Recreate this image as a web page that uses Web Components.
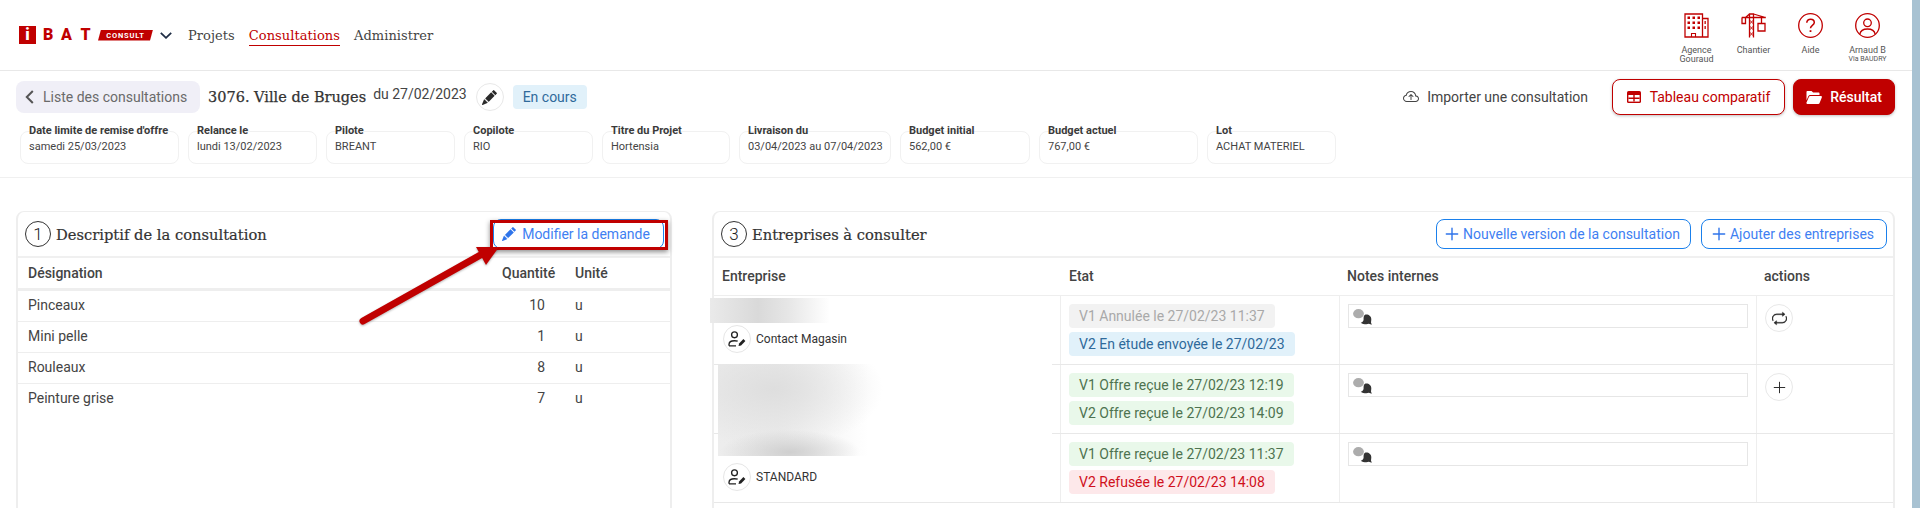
<!DOCTYPE html>
<html lang="fr">
<head>
<meta charset="utf-8">
<title>Consultations</title>
<style>
  html, body { margin: 0; height: 508px; overflow: hidden; background: #fff; }
  body { font: 14px Roboto, "Liberation Sans", sans-serif; color: #444; }
</style>
</head>
<body>
<app-shell>
  <app-header>
    <brand-logo slot="brand"></brand-logo>
    <nav-link slot="nav">Projets</nav-link>
    <nav-link slot="nav" active>Consultations</nav-link>
    <nav-link slot="nav">Administrer</nav-link>
    <tool-item slot="tools" icon="building">Agence<br>Gouraud</tool-item>
    <tool-item slot="tools" icon="crane">Chantier</tool-item>
    <tool-item slot="tools" icon="help">Aide</tool-item>
    <tool-item slot="tools" icon="user">Arnaud B<small slot="sub">Via BAUDRY</small></tool-item>
  </app-header>

  <consult-bar>
    <back-link slot="left">Liste des consultations</back-link>
    <page-title slot="left" date="du 27/02/2023">3076. Ville de Bruges</page-title>
    <round-btn slot="left" icon="pencil"></round-btn>
    <state-badge slot="left">En cours</state-badge>
    <import-link slot="right">Importer une consultation</import-link>
    <action-btn slot="right" icon="table">Tableau comparatif</action-btn>
    <action-btn slot="right" icon="folder" filled>Résultat</action-btn>
    <info-card slot="cards" label="Date limite de remise d'offre" w="159">samedi 25/03/2023</info-card>
    <info-card slot="cards" label="Relance le" w="129">lundi 13/02/2023</info-card>
    <info-card slot="cards" label="Pilote" w="129">BREANT</info-card>
    <info-card slot="cards" label="Copilote" w="129">RIO</info-card>
    <info-card slot="cards" label="Titre du Projet" w="128">Hortensia</info-card>
    <info-card slot="cards" label="Livraison du" w="152">03/04/2023 au 07/04/2023</info-card>
    <info-card slot="cards" label="Budget initial" w="130">562,00 €</info-card>
    <info-card slot="cards" label="Budget actuel" w="159">767,00 €</info-card>
    <info-card slot="cards" label="Lot" w="129">ACHAT MATERIEL</info-card>
  </consult-bar>

  <panel-row>
    <panel-card num="1" heading="Descriptif de la consultation" style="width:656px">
      <outline-btn slot="buttons" icon="pencil" style="--w:171px;--gap:6px;--pr:5px">Modifier la demande</outline-btn>
      <line-head>
        <span>Désignation</span><span>Quantité</span><span>Unité</span>
      </line-head>
      <line-row qty="10" unit="u">Pinceaux</line-row>
      <line-row qty="1" unit="u">Mini pelle</line-row>
      <line-row qty="8" unit="u">Rouleaux</line-row>
      <line-row qty="7" unit="u" last>Peinture grise</line-row>
    </panel-card>

    <panel-card num="3" heading="Entreprises à consulter" style="width:1183px">
      <outline-btn slot="buttons" icon="plus" style="--w:255px;--gap:4px;--pr:2px">Nouvelle version de la consultation</outline-btn>
      <outline-btn slot="buttons" icon="plus" style="--w:186px;--gap:4px;--pr:2px">Ajouter des entreprises</outline-btn>
      <firm-head>
        <span>Entreprise</span><span>Etat</span><span>Notes internes</span><span>actions</span>
      </firm-head>
      <firm-row>
        <blur-patch slot="firm" kind="a"></blur-patch>
        <contact-tag slot="firm">Contact Magasin</contact-tag>
        <status-chip slot="state" tone="grey">V1 Annulée le 27/02/23 11:37</status-chip>
        <status-chip slot="state" tone="blue">V2 En étude envoyée le 27/02/23</status-chip>
        <note-field slot="notes"></note-field>
        <round-btn slot="actions" icon="repeat"></round-btn>
      </firm-row>
      <firm-row>
        <blur-patch slot="firm" kind="b"></blur-patch>
        <status-chip slot="state" tone="green">V1 Offre reçue le 27/02/23 12:19</status-chip>
        <status-chip slot="state" tone="green">V2 Offre reçue le 27/02/23 14:09</status-chip>
        <note-field slot="notes"></note-field>
        <round-btn slot="actions" icon="plus"></round-btn>
      </firm-row>
      <firm-row>
        <contact-tag slot="firm">STANDARD</contact-tag>
        <status-chip slot="state" tone="green">V1 Offre reçue le 27/02/23 11:37</status-chip>
        <status-chip slot="state" tone="red">V2 Refusée le 27/02/23 14:08</status-chip>
        <note-field slot="notes"></note-field>
      </firm-row>
    </panel-card>
  </panel-row>
  <call-out></call-out>
</app-shell>

<script>
const SERIF = '"DejaVu Serif", "Liberation Serif", serif';

const ICONS = {
  pencil: '<svg viewBox="0 0 16 16" fill="currentColor"><path d="M12.854.146a.5.5 0 0 0-.707 0L10.5 1.793 14.207 5.5l1.647-1.646a.5.5 0 0 0 0-.708l-3-3zm.646 6.061L9.793 2.5 3.293 9H3.5a.5.5 0 0 1 .5.5v.5h.5a.5.5 0 0 1 .5.5v.5h.5a.5.5 0 0 1 .5.5v.5h.5a.5.5 0 0 1 .5.5v.207l6.5-6.5zm-7.468 7.468A.5.5 0 0 1 6 13.5V13h-.5a.5.5 0 0 1-.5-.5V12h-.5a.5.5 0 0 1-.5-.5V11h-.5a.5.5 0 0 1-.5-.5V10h-.5a.499.499 0 0 1-.175-.032l-.179.178a.5.5 0 0 0-.11.168l-2 5a.5.5 0 0 0 .65.65l5-2a.5.5 0 0 0 .168-.11l.178-.178z"/></svg>',
  plus: '<svg viewBox="0 0 16 16" fill="none" stroke="currentColor" stroke-width="1.6" stroke-linecap="round"><path d="M8 1.500v13M1.500 8h13"/></svg>',
  repeat: '<svg viewBox="0 0 16 16" fill="currentColor" stroke="currentColor" stroke-width=".35"><path d="M11 5.466V4H5a4 4 0 0 0-3.584 5.777.5.5 0 1 1-.896.446A5 5 0 0 1 5 3h6V1.534a.25.25 0 0 1 .41-.192l2.36 1.966c.12.1.12.284 0 .384l-2.36 1.966a.25.25 0 0 1-.41-.192Zm3.81.086a.5.5 0 0 1 .67.225A5 5 0 0 1 11 13H5v1.466a.25.25 0 0 1-.41.192l-2.36-1.966a.25.25 0 0 1 0-.384l2.36-1.966a.25.25 0 0 1 .41.192V12h6a4 4 0 0 0 3.585-5.777.5.5 0 0 1 .225-.67Z"/></svg>',
  table: '<svg viewBox="0 0 14 12"><rect width="14" height="12" rx="1.6" fill="currentColor"/><path d="M1.4 4h11.2v6.6H1.4z" fill="#fff"/><path d="M6.3 4h1.4v6.6H6.3zM1.4 6.6h11.2V8H1.4z" fill="currentColor"/></svg>',
  folder: '<svg viewBox="0 0 16 13" fill="currentColor"><path d="M1.5 0h4l1.6 1.6h5.4c.6 0 1 .4 1 1V4H4.2c-.9 0-1.5.4-1.900 1.200L.5 9.300V1c0-.6.4-1 1-1Z"/><path d="M4.200 5h10.600c.8 0 1.300.7 1 1.400l-2.200 5.600c-.2.6-.7 1-1.400 1H1.200c-.6 0-1-.6-.8-1.200l2.500-5.900C3.100 5.300 3.600 5 4.200 5Z"/></svg>',
  cloud: '<svg viewBox="0 0 16 16" fill="currentColor"><path d="M7.646 5.146a.5.5 0 0 1 .708 0l2 2a.5.5 0 0 1-.708.708L8.500 6.707V10.500a.5.5 0 0 1-1 0V6.707L6.354 7.854a.5.5 0 1 1-.708-.708l2-2z"/><path d="M4.406 3.342A5.530 5.530 0 0 1 8 2c2.690 0 4.923 2 5.166 4.579C14.758 6.804 16 8.137 16 9.773 16 11.569 14.502 13 12.687 13H3.781C1.708 13 0 11.366 0 9.318c0-1.763 1.266-3.223 2.942-3.593.143-.863.698-1.723 1.464-2.383zm.653.757c-.757.653-1.153 1.440-1.153 2.056v.448l-.445.049C2.064 6.805 1 7.952 1 9.318 1 10.785 2.230 12 3.781 12h8.906C13.980 12 15 10.988 15 9.773c0-1.216-1.020-2.228-2.313-2.228h-.5v-.5C12.188 4.825 10.328 3 8 3a4.530 4.530 0 0 0-2.941 1.100z"/></svg>',
  building: '<svg viewBox="0 0 25 25" fill="none" stroke="#c00000" stroke-width="1.100"><path d="M1 1h17.500v23H1zM18.500 5.500h5.500V24h-5.500M.5 24h24" stroke-width="1.300"/><path d="M7.500 24v-3.500h4V24" /><g fill="#c00000" stroke="none"><rect x="3.500" y="3.500" width="2.500" height="2.500"/><rect x="8.500" y="3.500" width="2.500" height="2.500"/><rect x="13.500" y="3.500" width="2.500" height="2.500"/><rect x="3.500" y="8.500" width="2.500" height="2.500"/><rect x="8.500" y="8.500" width="2.500" height="2.500"/><rect x="13.500" y="8.500" width="2.500" height="2.500"/><rect x="3.500" y="13.500" width="2.500" height="2.500"/><rect x="8.500" y="13.500" width="2.500" height="2.500"/><rect x="13.500" y="13.500" width="2.500" height="2.500"/><rect x="20.500" y="8" width="1.300" height="3"/><rect x="20.500" y="13" width="1.300" height="3"/></g></svg>',
  crane: '<svg viewBox="0 0 25 25" fill="none" stroke="#c00000" stroke-width="1.300"><path d="M8.500 24.500V1h4v23.500M.8 4.500h24M1 4.500v6h3.500v-6M12.500 1l12 3.500M8.500 1L4.500 4.500"/><path d="M8.500 7l4 4M12.500 7l-4 4M8.500 13l4 4M12.500 13l-4 4M8.500 19l4 4M12.500 19l-4 4" stroke-width=".9"/><path d="M20.500 4.500v6M17 10.500h7v7.500h-7z"/></svg>',
  help: '<svg viewBox="0 0 25 25" fill="none" stroke="#c00000" stroke-width="1.300"><circle cx="12.500" cy="12.500" r="11.800"/><path d="M8.800 9.800c0-2.200 1.600-3.600 3.800-3.600s3.700 1.400 3.700 3.300c0 2.900-3.800 2.900-3.800 5.700" stroke-width="1.500"/><path d="M12.500 17.200v1.800" stroke-width="1.800"/></svg>',
  user: '<svg viewBox="0 0 25 25" fill="none" stroke="#c00000" stroke-width="1.300"><circle cx="12.500" cy="12.500" r="11.800"/><circle cx="12.500" cy="9.800" r="3.800"/><path d="M4.800 21.300c.6-3.700 3.300-5.300 7.700-5.300s7.100 1.600 7.700 5.300"/></svg>',
  contact: '<svg viewBox="0 0 18 16" fill="none" stroke="#222" stroke-width="1.350"><circle cx="6.500" cy="3.800" r="2.900"/><path d="M1 14.800v-1.300c0-2.700 2.300-3.800 5.500-3.800 1.200 0 2.300.2 3.200.5M1 14.800h7"/><path d="M10.500 15l.6-2.600 4.300-4.300 2 2-4.300 4.300z" fill="#222" stroke="none"/></svg>',
  bubbles: '<svg viewBox="0 0 19 16"><ellipse cx="5.500" cy="4.700" rx="5.400" ry="4.600" fill="#acacac"/><path d="M13.300 5.400c2.800 0 5 2.100 5 4.700 0 1.300-.3 3.300-.3 3.300l.8 2.300-3-.9c-.7.300-1.500.5-2.500.5-2.100 0-4.200-.5-5.500-1.500 1.700-.2 2.800-1.700 2.800-3.200 0-2.800 0-5.200 2.700-5.200Z" fill="#333"/></svg>'
};

// small base so each element is just: styles + markup
class ShadowEl extends HTMLElement {
  static css = '';
  html() { return '<slot></slot>'; }
  connectedCallback() {
    if (this.shadowRoot) return;
    this.attachShadow({ mode: 'open' });
    this.shadowRoot.innerHTML = `<style>${this.constructor.css}</style>${this.html()}`;
  }
}

class AppShell extends ShadowEl {
  static css = `
    :host { display: block; position: relative; height: 508px; overflow: hidden; padding-right: 8px; box-sizing: border-box; }
    .scroll { position: absolute; top: 0; right: 0; bottom: 0; width: 8px; background: #a8c2d2; }
  `;
  html() { return '<slot></slot><div class="scroll"></div>'; }
}

class AppHeader extends ShadowEl {
  static css = `
    :host { display: flex; align-items: center; height: 71px; box-sizing: border-box; padding: 0 16px 0 19px; border-bottom: 1px solid #e8e8e8; }
    nav { display: flex; gap: 14px; margin-left: 16px; }
    .tools { margin-left: auto; display: flex; align-self: flex-start; padding-top: 13px; }
  `;
  html() {
    return `<slot name="brand"></slot><nav><slot name="nav"></slot></nav><div class="tools"><slot name="tools"></slot></div>`;
  }
}

class BrandLogo extends ShadowEl {
  static css = `
    :host { display: flex; align-items: center; color: #c00000; }
    .i { width: 17px; height: 18px; background: #c00000; color: #fff; font: 900 16px/18px Roboto, sans-serif; text-align: center; }
    .l { font: 900 16px/18px Roboto, sans-serif; margin-left: 7px; text-align: center; }
    .c { margin-left: 7px; width: 55px; height: 11px; background: #c00000; color: #fff; font: 700 7.500px/11px Roboto, sans-serif; letter-spacing: .8px; text-align: center;
         clip-path: polygon(3px 0, 100% 0, calc(100% - 3px) 100%, 0 100%); }
    svg { width: 12px; height: 7px; margin-left: 7px; }
  `;
  html() {
    return `<span class="i">i</span><span class="l" style="width:10px">B</span><span class="l" style="width:13px">A</span><span class="l" style="width:11px">T</span><span class="c">CONSULT</span>
      <svg viewBox="0 0 12 7" fill="none" stroke="#1f2d45" stroke-width="1.800"><path d="M.8.8 6 5.800 11.200.8"/></svg>`;
  }
}

class NavLink extends ShadowEl {
  static css = `
    :host { display: block; font: 13px/18px ${SERIF}; letter-spacing: .05px; color: #444; padding-top: 2px; border-bottom: 1px solid transparent; }
    :host([active]) { color: #c00000; border-bottom-color: #c00000; }
  `;
}

class ToolItem extends ShadowEl {
  static css = `
    :host { display: flex; flex-direction: column; align-items: center; width: 57px; font: 9px/9px Roboto, sans-serif; color: #555; text-align: center; }
    .ic { width: 25px; height: 25px; margin-bottom: 8px; }
    ::slotted(small) { display: block; font-size: 7px; line-height: 9px; white-space: nowrap; }
  `;
  html() { return `<div class="ic">${ICONS[this.getAttribute('icon')]}</div><div><slot></slot><slot name="sub"></slot></div>`; }
}

class ConsultBar extends ShadowEl {
  static css = `
    :host { display: block; height: 107px; box-sizing: border-box; padding: 8px 17px 0 16px; border-bottom: 1px solid #f0f0f0; }
    .top { display: flex; align-items: center; height: 36px; }
    .left, .right { display: flex; align-items: center; }
    .right { margin-left: auto; }
    .cards { display: flex; gap: 9px; margin-top: 16px; padding-left: 4px; }
  `;
  html() {
    return `<div class="top"><div class="left"><slot name="left"></slot></div><div class="right"><slot name="right"></slot></div></div>
      <div class="cards"><slot name="cards"></slot></div>`;
  }
}

class BackLink extends ShadowEl {
  static css = `
    :host { display: flex; align-items: center; gap: 9px; width: 184px; height: 32px; box-sizing: border-box; padding-left: 9px; background: #f0eff7; border-radius: 8px; color: #6a6a6a; font-size: 14px; white-space: nowrap; }
    svg { width: 9px; height: 14px; }
  `;
  html() { return `<svg viewBox="0 0 9 14" fill="none" stroke="#555" stroke-width="2"><path d="M7.800 1 1.800 7l6 6"/></svg><slot></slot>`; }
}

class PageTitle extends ShadowEl {
  static css = `
    :host { display: flex; align-items: center; margin-left: 8px; white-space: nowrap; }
    .t { font: 14.500px/20px ${SERIF}; color: #333; -webkit-text-stroke: .25px #333; }
    .d { font-size: 14px; color: #444; margin-left: 7px; position: relative; top: -3px; }
  `;
  html() { return `<span class="t"><slot></slot></span><span class="d">${this.getAttribute('date')}</span>`; }
}

class RoundBtn extends ShadowEl {
  static css = `
    :host { display: flex; align-items: center; justify-content: center; width: 28px; height: 28px; box-sizing: border-box; border: 1px solid #e8e8e8; border-radius: 50%; color: #2a2a2a; }
    :host([slot="left"]) { margin-left: 9px; }
    svg { display: block; width: 15px; height: 15px; }
    :host([icon="plus"]) svg { width: 13px; height: 13px; stroke-width: 1.200; }
  `;
  html() { return ICONS[this.getAttribute('icon')]; }
}

class StateBadge extends ShadowEl {
  static css = `
    :host { display: block; margin-left: 9px; height: 24px; width: 74px; border-radius: 4px; background: #e1f1fa; color: #2f6a9b; font-size: 14px; line-height: 24px; text-align: center; }
  `;
}

class ImportLink extends ShadowEl {
  static css = `
    :host { display: flex; align-items: center; gap: 8px; color: #444; font-size: 14px; white-space: nowrap; margin-right: 24px; }
    svg { width: 16px; height: 16px; }
  `;
  html() { return ICONS.cloud + '<slot></slot>'; }
}

class ActionBtn extends ShadowEl {
  static css = `
    :host { display: flex; align-items: center; justify-content: center; gap: 9px; height: 36px; box-sizing: border-box; width: 173px; border: 1px solid #c00000; border-radius: 8px; color: #c00000; background: #fff; font-size: 14px; white-space: nowrap; box-shadow: 0 1px 3px rgba(0,0,0,.25); }
    :host([filled]) { width: 102px; margin-left: 8px; background: #c00000; color: #fff; font-weight: 500; gap: 8px; }
    svg { width: 14px; height: 12px; }
    :host([filled]) svg { width: 16px; height: 13px; }
  `;
  html() { return ICONS[this.getAttribute('icon')] + '<slot></slot>'; }
}

class InfoCard extends ShadowEl {
  static css = `
    :host { display: block; height: 33px; box-sizing: border-box; padding: 0 8px; border: 1px solid #f1f1f1; border-radius: 8px; font-size: 11px; line-height: 14px; color: #444; white-space: nowrap; }
    .l { font-weight: 700; margin-top: -8px; color: #3a3a3a; }
    .v { margin-top: 2px; }
  `;
  html() {
    this.style.width = this.getAttribute('w') + 'px';
    return `<div class="l">${this.getAttribute('label')}</div><div class="v"><slot></slot></div>`;
  }
}

class PanelRow extends ShadowEl {
  static css = `
    :host { display: flex; gap: 40px; padding: 33px 0 0 16px; align-items: flex-start; }
  `;
}

class PanelCard extends ShadowEl {
  static css = `
    :host { display: block; box-sizing: border-box; height: 320px; border: 2px solid #eee; border-width: 1px 2px; border-radius: 8px 8px 0 0; }
    header { display: flex; align-items: center; height: 46px; box-sizing: border-box; border-bottom: 2px solid #f0f0f0; padding: 0 6px 0 7px; }
    .n { flex: none; width: 26px; height: 26px; box-sizing: border-box; border: 1px solid #333; border-radius: 50%; text-align: center; font: 300 17px/24px Roboto, sans-serif; color: #222; }
    h2 { margin: 1px 0 0 5px; font: 14.700px/20px ${SERIF}; color: #333; -webkit-text-stroke: .2px #333; }
    .b { margin-left: auto; display: flex; gap: 10px; }
  `;
  html() {
    return `<header><span class="n">${this.getAttribute('num')}</span><h2>${this.getAttribute('heading')}</h2>
      <div class="b"><slot name="buttons"></slot></div></header><slot></slot>`;
  }
}

class OutlineBtn extends ShadowEl {
  static css = `
    :host { display: flex; align-items: center; justify-content: center; gap: var(--gap); width: var(--w); height: 30px; box-sizing: border-box; padding-right: var(--pr); border: 1px solid #1a80ec; border-radius: 8px; color: #3f7ff2; font-size: 14px; white-space: nowrap; }
    svg { width: 14px; height: 14px; color: #2f74ea; }
  `;
  html() { return ICONS[this.getAttribute('icon')] + '<slot></slot>'; }
}

class LineHead extends ShadowEl {
  static css = `
    :host { display: grid; grid-template-columns: 1fr 73px 105px; height: 33px; box-sizing: border-box; align-items: center; border-bottom: 3px solid #eee; font-weight: 500; color: #444; }
    ::slotted(span) { padding: 0 10px; }
    ::slotted(span:nth-child(2)) { text-align: right; }
  `;
}

class LineRow extends ShadowEl {
  static css = `
    :host { display: grid; grid-template-columns: 1fr 73px 105px; height: 31px; box-sizing: border-box; padding-bottom: 3px; align-items: center; border-bottom: 1px solid #eee; color: #444; }
    :host([last]) { border-bottom: 0; padding-bottom: 4px; }
    .a { padding-left: 10px; }
    .q { padding-right: 20px; text-align: right; }
    .u { padding-left: 10px; }
  `;
  html() { return `<div class="a"><slot></slot></div><div class="q">${this.getAttribute('qty')}</div><div class="u">${this.getAttribute('unit')}</div>`; }
}

const FIRM_COLS = '346px 279px 417px 1fr';

class FirmHead extends ShadowEl {
  static css = `
    :host { display: grid; grid-template-columns: ${FIRM_COLS}; height: 38px; box-sizing: border-box; padding-bottom: 2px; align-items: center; border-bottom: 1px solid #eee; font-weight: 500; color: #444; }
    ::slotted(span) { padding-left: 8px; }
    ::slotted(span:nth-child(2)) { padding-left: 9px; }
  `;
}

class FirmRow extends ShadowEl {
  static css = `
    :host { display: grid; position: relative; grid-template-columns: ${FIRM_COLS}; height: 69px; box-sizing: border-box; border-bottom: 1px solid #e8e8e8; }
    .c { border-left: 1px solid #eee; padding: 8px 8px 0; box-sizing: border-box; min-width: 0; }
    .firm { display: flex; align-items: flex-end; padding: 0 0 11px 9px; }
    .state { display: flex; flex-direction: column; align-items: flex-start; gap: 4px; }
    .actions { padding-left: 8px; }
  `;
  html() {
    return `<div class="firm"><slot name="firm"></slot></div><div class="c state"><slot name="state"></slot></div>
      <div class="c"><slot name="notes"></slot></div><div class="c actions"><slot name="actions"></slot></div>`;
  }
}

class ContactTag extends ShadowEl {
  static css = `
    :host { display: flex; align-items: center; gap: 5px; font-size: 12px; color: #333; white-space: nowrap; }
    .o { display: flex; align-items: center; justify-content: center; width: 28px; height: 28px; box-sizing: border-box; border: 1px solid #e6e6e6; border-radius: 50%; }
    svg { width: 18px; height: 16px; }
  `;
  html() { return `<span class="o">${ICONS.contact}</span><slot></slot>`; }
}

// masked company names, they sit over the row lines
class BlurPatch extends ShadowEl {
  static css = `
    :host { position: absolute; z-index: 1; display: block; }
    :host([kind="a"]) { left: -4px; top: 2px; width: 120px; height: 25px;
      background: linear-gradient(90deg, #eaeaea 0, #d9d9d9 40%, #e6e6e6 65%, #fff 100%); }
    :host([kind="b"]) { left: 4px; top: -1px; width: 334px; height: 92px;
      background:
        radial-gradient(70px 22px at 72px 88px, #cfcfcf, rgba(255,255,255,0)),
        radial-gradient(110px 60px at 55px 25px, #dedede, rgba(255,255,255,0)),
        linear-gradient(90deg, #ededed 0, #ececec 60px, #fff 150px); }
  `;
  html() { return ''; }
}

class StatusChip extends ShadowEl {
  static css = `
    :host { display: block; height: 24px; box-sizing: border-box; padding: 0 10px; border-radius: 4px; line-height: 24px; font-size: 14px; white-space: nowrap; }
    :host([tone="grey"]) { background: #f2f2f2; color: #a9a9a9; }
    :host([tone="blue"]) { background: #e1f1fa; color: #2f6a9b; }
    :host([tone="green"]) { background: #e9f8ea; color: #4e7350; }
    :host([tone="red"]) { background: #fde8ea; color: #d0101c; }
  `;
}

class NoteField extends ShadowEl {
  static css = `
    :host { display: block; height: 24px; box-sizing: border-box; border: 1px solid #e6e6e6; padding: 4px 0 0 4px; width: 400px; }
    svg { display: block; width: 19px; height: 16px; }
  `;
  html() { return ICONS.bubbles; }
}

class CallOut extends ShadowEl {
  static css = `
    :host { position: absolute; inset: 0; display: block; pointer-events: none; z-index: 5; }
    .box { position: absolute; left: 490px; top: 220px; width: 178px; height: 30px; box-sizing: border-box; border: 3px solid #c00000; box-shadow: 0 2px 5px rgba(0,0,0,.45); }
    svg { position: absolute; left: 0; top: 0; }
  `;
  html() {
    return `<div class="box"></div><svg width="700" height="340" style="filter:drop-shadow(0 1px 1px rgba(0,0,0,.3))">
      <path d="M363 321 484 253" stroke="#c00000" stroke-width="7" stroke-linecap="round"/>
      <path d="M499 247 476 247 486 265Z" fill="#c00000"/></svg>`;
  }
}

const elements = {
  'app-shell': AppShell, 'app-header': AppHeader, 'brand-logo': BrandLogo, 'nav-link': NavLink,
  'tool-item': ToolItem, 'consult-bar': ConsultBar, 'back-link': BackLink, 'page-title': PageTitle,
  'round-btn': RoundBtn, 'state-badge': StateBadge, 'import-link': ImportLink, 'action-btn': ActionBtn,
  'info-card': InfoCard, 'panel-row': PanelRow, 'panel-card': PanelCard, 'outline-btn': OutlineBtn,
  'line-head': LineHead, 'line-row': LineRow, 'firm-head': FirmHead, 'firm-row': FirmRow,
  'contact-tag': ContactTag, 'blur-patch': BlurPatch, 'status-chip': StatusChip, 'note-field': NoteField,
  'call-out': CallOut
};
for (const [name, cls] of Object.entries(elements)) customElements.define(name, cls);
</script>
</body>
</html>
